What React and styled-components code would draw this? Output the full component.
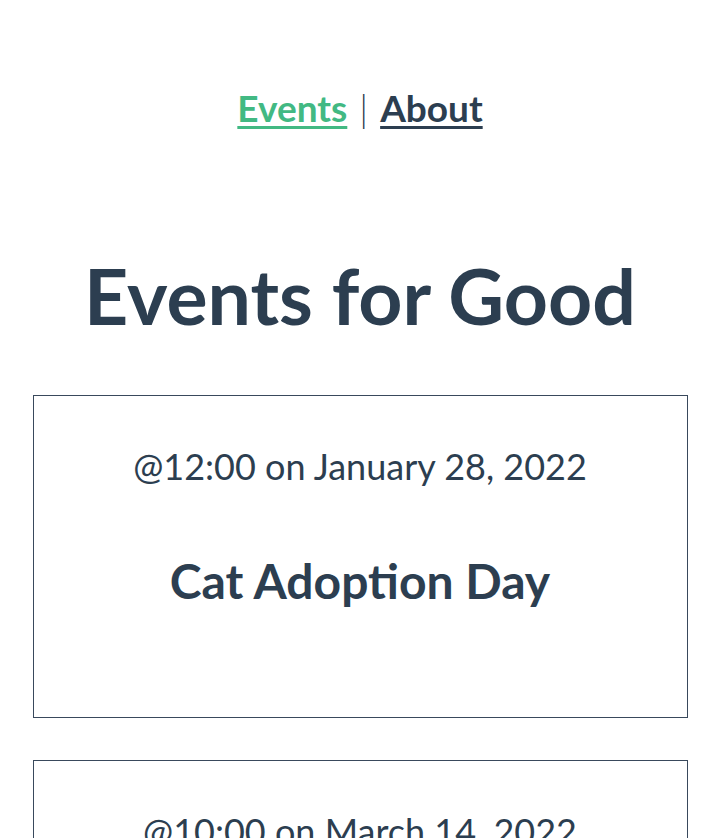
import React from "react";
import styled, { createGlobalStyle } from "styled-components";

const events = [
	{ id: 1, time: "12:00", date: "January 28, 2022", title: "Cat Adoption Day" },
	{ id: 2, time: "10:00", date: "March 14, 2022", title: "Community Gardening" },
];

export default function App() {
	return (
		<>
			<GlobalStyle />
			<Page>
				<Nav>
					<NavLink href="#" $active>
						Events
					</NavLink>
					<Sep>|</Sep>
					<NavLink href="#">About</NavLink>
				</Nav>
				<Title>Events for Good</Title>
				<List>
					{events.map((ev) => (
						<Card key={ev.id}>
							<CardDate>
								@{ev.time} on {ev.date}
							</CardDate>
							<CardTitle>{ev.title}</CardTitle>
						</Card>
					))}
				</List>
			</Page>
		</>
	);
}

const GlobalStyle = createGlobalStyle`
	html, body {
		margin: 0;
		padding: 0;
		background: #fff;
		overflow: hidden;
	}
	body {
		font-family: Lato, "Open Sans", sans-serif;
		color: #2c3e50;
		-webkit-font-smoothing: antialiased;
	}
`;

const Page = styled.div`
	display: flex;
	flex-direction: column;
	align-items: center;
	text-align: center;
	height: 838px;
	overflow: hidden;
`;

const Nav = styled.nav`
	display: flex;
	align-items: baseline;
	justify-content: center;
	gap: 12px;
	padding-top: 84px;
	font-size: 37px;
	line-height: 48px;
`;

const NavLink = styled.a`
	font-weight: bold;
	color: ${(p) => (p.$active ? "#42b983" : "#2c3e50")};
	text-decoration: underline;
	text-decoration-thickness: 3px;
	text-underline-offset: 4px;
`;

const Sep = styled.span`
	font-weight: 300;
	color: #2c3e50;
`;

const Title = styled.h1`
	margin: 118px 0 0;
	font-size: 77px;
	line-height: 90px;
	font-weight: bold;
`;

const List = styled.div`
	display: flex;
	flex-direction: column;
	align-items: center;
	gap: 42px;
	margin-top: 55px;
`;

const Card = styled.div`
	box-sizing: border-box;
	width: 655px;
	height: 323px;
	border: 1px solid #39495c;
	padding-top: 48px;
	flex-shrink: 0;
`;

const CardDate = styled.h4`
	margin: 0;
	font-size: 36px;
	line-height: 44px;
	font-weight: normal;
`;

const CardTitle = styled.h2`
	margin: 65px 0 0;
	font-size: 48px;
	line-height: 56px;
	font-weight: bold;
`;
